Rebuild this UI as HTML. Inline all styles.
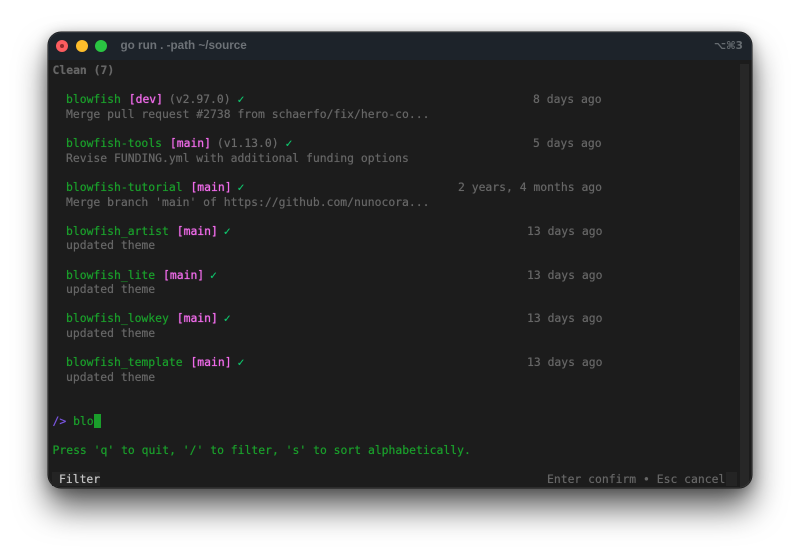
<!DOCTYPE html>
<html><head><meta charset="utf-8">
<style>
html,body{margin:0;padding:0;width:800px;height:552px;overflow:hidden;background:#fff}
#win{position:absolute;left:48px;top:32px;width:704px;height:456px;border-radius:13px;background:#1c1c1c;box-shadow:0 0 0 .5px #111,0 20px 32px 0 rgba(0,0,0,.62),0 3px 14px rgba(0,0,0,.3);overflow:hidden}
#win:after{content:"";position:absolute;inset:0;border-radius:13px;box-shadow:inset 0 0 0 1px rgba(120,120,120,.18)}
#tb{position:absolute;left:0;top:0;width:704px;height:28px;background:#1d232a}
.d{position:absolute;top:8px;width:12px;height:12px;border-radius:50%}
.l{position:absolute;white-space:pre;font:11.4px/14px "DejaVu Sans Mono","Liberation Mono",monospace;color:#666;filter:blur(.25px);text-shadow:0 0 .5px currentColor}
.g{color:#1a9e2b}.p{color:#f26cec;position:relative;left:1px;text-shadow:0 0 .8px #f26cec}.v{color:#6a6a6a}.c{color:#0fc46c;font-weight:bold}
.t{color:#666}
#sb{position:absolute;left:692px;top:32px;width:9px;height:424px;background:#272727}
</style></head><body>
<div id="win">
<div id="tb"></div>
<div class="d" style="left:8px;background:#fb5c5f"></div>
<div style="position:absolute;left:12px;top:12px;width:4px;height:4px;border-radius:50%;background:#8e2a2c"></div>
<div class="d" style="left:28px;background:#fdbd2b"></div>
<div class="d" style="left:47px;background:#2ac542"></div>
<div style="position:absolute;left:72.5px;top:7px;font:bold 11.7px/14px 'Liberation Sans',sans-serif;color:#6d7277;white-space:pre;filter:blur(.25px)">go run . -path ~/source</div>
<div style="position:absolute;right:9px;top:7px;font:bold 10.5px/14px 'DejaVu Sans',sans-serif;color:#666c71;white-space:pre;filter:blur(.25px)">⌥⌘3</div>
<div id="sb"></div>
</div>
<div class="l" style="left:52.5px;top:63px;font-weight:bold;color:#666">Clean (7)</div>

<div class="l" style="left:66px;top:92px"><span class="g">blowfish</span> <span class="p">[dev]</span> <span class="v">(v2.97.0)</span> <span class="c">✓</span></div>
<div class="l t" style="left:66px;top:107px">Merge pull request #2738 from schaerfo/fix/hero-co...</div>
<div class="l t" style="left:533px;top:92px">8 days ago</div>

<div class="l" style="left:66px;top:136px"><span class="g">blowfish-tools</span> <span class="p">[main]</span> <span class="v">(v1.13.0)</span> <span class="c">✓</span></div>
<div class="l t" style="left:66px;top:151px">Revise FUNDING.yml with additional funding options</div>
<div class="l t" style="left:533px;top:136px">5 days ago</div>

<div class="l" style="left:66px;top:180px"><span class="g">blowfish-tutorial</span> <span class="p">[main]</span> <span class="c">✓</span></div>
<div class="l t" style="left:66px;top:195px">Merge branch 'main' of https://github.com/nunocora...</div>
<div class="l t" style="left:458px;top:180px">2 years, 4 months ago</div>

<div class="l" style="left:66px;top:224px"><span class="g">blowfish_artist</span> <span class="p">[main]</span> <span class="c">✓</span></div>
<div class="l t" style="left:66px;top:238px">updated theme</div>
<div class="l t" style="left:527px;top:224px">13 days ago</div>

<div class="l" style="left:66px;top:268px"><span class="g">blowfish_lite</span> <span class="p">[main]</span> <span class="c">✓</span></div>
<div class="l t" style="left:66px;top:282px">updated theme</div>
<div class="l t" style="left:527px;top:268px">13 days ago</div>

<div class="l" style="left:66px;top:311px"><span class="g">blowfish_lowkey</span> <span class="p">[main]</span> <span class="c">✓</span></div>
<div class="l t" style="left:66px;top:326px">updated theme</div>
<div class="l t" style="left:527px;top:311px">13 days ago</div>

<div class="l" style="left:66px;top:355px"><span class="g">blowfish_template</span> <span class="p">[main]</span> <span class="c">✓</span></div>
<div class="l t" style="left:66px;top:370px">updated theme</div>
<div class="l t" style="left:527px;top:355px">13 days ago</div>

<div class="l" style="left:52.5px;top:414px"><span style="color:#7a55e0">/&gt;</span> <span class="g">blo</span></div>
<div style="position:absolute;left:94px;top:414px;width:6.5px;height:14px;background:#1a9e2b"></div>
<div class="l g" style="left:52.5px;top:443px">Press 'q' to quit, '/' to filter, 's' to sort alphabetically.</div>

<div style="position:absolute;left:52px;top:472px;width:48px;height:14px;background:#242424"></div>
<div class="l" style="left:59px;top:472px;color:#c4c4c4">Filter</div>
<div class="l t" style="left:547px;top:472px">Enter confirm • Esc cancel</div>
<div style="position:absolute;left:726px;top:472px;width:11px;height:14px;background:#242424"></div>
</body></html>
